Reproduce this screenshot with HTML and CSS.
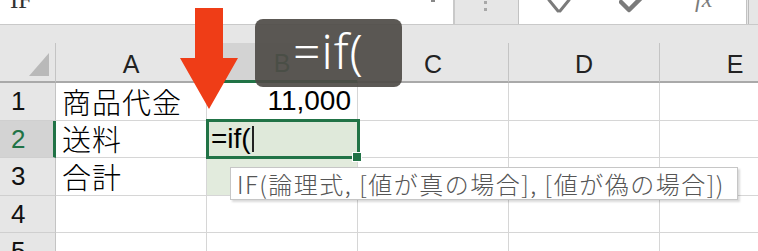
FILE: index.html
```html
<!DOCTYPE html>
<html lang="ja">
<head>
<meta charset="utf-8">
<title>Excel IF</title>
<link rel="stylesheet" href="styles.css">
</head>
<body>
<div class="app">
  <div class="fbar">
    <div class="namebox"><span class="nb-text">IF</span><span class="nb-drop"></span></div>
    <div class="fb-gap"><span class="dot"></span><span class="dot"></span></div>
    <div class="fb-input">
      <svg class="ico ico-x" width="26" height="24" viewBox="0 0 26 24"><path d="M3 0 L12 11 M23 0 L14 11" stroke="#7b7b7b" stroke-width="3" fill="none" stroke-linecap="round"/></svg>
      <svg class="ico ico-ok" width="28" height="24" viewBox="0 0 28 24"><path d="M2 2 L10 10 L26 -6" stroke="#7b7b7b" stroke-width="4.5" fill="none" stroke-linecap="round" stroke-linejoin="round"/></svg>
      <span class="ico-fx">fx</span>
    </div>
    <div class="fb-rest"></div>
  </div>
  <div class="gap"></div>
  <div class="sheet">
    <div class="corner"><span class="tri"></span></div>
    <div class="ch">A</div>
    <div class="ch ch-sel">B</div>
    <div class="ch">C</div>
    <div class="ch">D</div>
    <div class="ch">E</div>

    <div class="rh">1</div>
    <div class="c jp">商品代金</div>
    <div class="c num">11,000</div>
    <div class="c"></div><div class="c"></div><div class="c"></div>

    <div class="rh rh-sel">2</div>
    <div class="c jp">送料</div>
    <div class="c sel"><span class="edit">=if(</span><span class="caret"></span><span class="handle"></span></div>
    <div class="c"></div><div class="c"></div><div class="c"></div>

    <div class="rh">3</div>
    <div class="c jp">合計</div>
    <div class="c tint"></div>
    <div class="c"></div><div class="c"></div><div class="c"></div>

    <div class="rh">4</div>
    <div class="c"></div><div class="c"></div><div class="c"></div><div class="c"></div><div class="c"></div>

    <div class="rh">5</div>
    <div class="c"></div><div class="c"></div><div class="c"></div><div class="c"></div><div class="c"></div>
  </div>

  <svg class="arrow" width="58" height="101" viewBox="0 0 58 101"><polygon points="15,0 43,0 43,50 58,50 29,101 0,50 15,50" fill="#ef3d17"/></svg>
  <div class="caption">=if(</div>
  <div class="tip">IF(論理式, [値が真の場合], [値が偽の場合])</div>
</div>
</body>
</html>
```
FILE: styles.css
```css
html, body {
  margin: 0;
  padding: 0;
  background: #ffffff;
  overflow: hidden;
}
.app {
  position: relative;
  width: 758px;
  height: 251px;
  overflow: hidden;
  background: #e6e6e6;
  font-family: "Noto Sans CJK JP", sans-serif;
}
.fbar {
  display: flex;
  height: 24px;
  border-bottom: 1px solid #c9c9c9;
}
.namebox {
  width: 453px;
  background: #fff;
  border-right: 2px solid #c9c9c9;
  position: relative;
  overflow: hidden;
}
.nb-text {
  display: block;
  margin: -12px 0 0 10px;
  font-family: "Liberation Serif", serif;
  font-size: 25px;
  line-height: 24px;
  color: #333;
}
.nb-drop {
  position: absolute;
  left: 431px;
  top: 0;
  width: 4px;
  height: 2px;
  background: #888;
}
.fb-gap {
  width: 65px;
  display: flex;
  flex-direction: column;
  align-items: center;
  gap: 4px;
  padding-top: 1px;
  margin-left: -2px;
}
.dot {
  width: 3px;
  height: 3px;
  background: #a8a8a8;
}
.fb-input {
  width: 227px;
  background: #fff;
  border-left: 1px solid #c2c2c2;
  border-right: 1px solid #c2c2c2;
  display: flex;
  align-items: flex-start;
  overflow: hidden;
}
.ico { display: block; flex: none; }
.ico-x { margin: 0 0 0 27px; }
.ico-ok { margin: 0 0 0 47px; }
.ico-fx {
  margin: -13px 0 0 48px;
  font-family: "Liberation Serif", serif;
  font-style: italic;
  font-size: 24px;
  line-height: 24px;
  color: #7b7b7b;
}
.fb-rest { flex: 1; border-left: 1px solid #bbb; margin-left: 1px; }
.gap { height: 18px; }

.sheet {
  display: grid;
  grid-template-columns: 56px repeat(5, 151px);
  grid-template-rows: 40px repeat(5, 37.5px);
  background: #fff;
}
.corner {
  background: #e6e6e6;
  border-right: 1px solid #c4c4c4;
  border-bottom: 2px solid #a9a9a9;
  position: relative;
}
.tri {
  position: absolute;
  left: 29px;
  top: 10px;
  width: 0;
  height: 0;
  border-left: 20px solid transparent;
  border-bottom: 23px solid #b9b9b9;
}
.ch {
  background: #e6e6e6;
  border-right: 1px solid #c4c4c4;
  border-bottom: 2px solid #a9a9a9;
  display: flex;
  justify-content: center;
  align-items: flex-end;
  padding-bottom: 2px;
  font-family: "Liberation Sans", sans-serif;
  font-size: 25px;
  line-height: 30px;
  color: #222;
  box-sizing: border-box;
}
.ch-sel {
  background: #d3d3d3;
  border-bottom: 3px solid #217346;
  color: #217346;
}
.rh {
  background: #e6e6e6;
  border-right: 1px solid #c4c4c4;
  border-bottom: 1px solid #cfcfcf;
  box-sizing: border-box;
  padding-left: 11px;
  display: flex;
  align-items: center;
  font-family: "Liberation Sans", sans-serif;
  font-size: 26px;
  line-height: 1;
  color: #111;
  overflow: hidden;
}
.rh-sel {
  background: #d3d3d3;
  color: #217346;
  border-right: 3px solid #217346;
}
.c {
  border-right: 1px solid #d6d6d6;
  border-bottom: 1px solid #d6d6d6;
  box-sizing: border-box;
  display: flex;
  align-items: center;
  padding: 0 6px;
  color: #000;
  white-space: nowrap;
  line-height: 1;
}
.jp {
  font-size: 29px;
  font-weight: 300;
  letter-spacing: 1px;
  padding-left: 6px;
}
.num {
  justify-content: flex-end;
  font-family: "Liberation Sans", sans-serif;
  font-size: 28px;
  padding-right: 6px;
}
.sel {
  position: relative;
  background: #dfe9da;
  padding-left: 4px;
}
.sel::after {
  content: "";
  position: absolute;
  left: -1px;
  top: -2px;
  right: -3px;
  bottom: -2px;
  border: 3px solid #217346;
}
.edit {
  font-family: "Liberation Sans", sans-serif;
  font-size: 28px;
  color: #000;
}
.caret {
  width: 2px;
  height: 26px;
  background: #222;
  margin-left: 1px;
}
.handle {
  position: absolute;
  right: -5px;
  bottom: -5px;
  width: 8px;
  height: 8px;
  background: #217346;
  border: 1px solid #fff;
  z-index: 2;
}
.tint { background: #e2ebdd; }

.arrow {
  position: absolute;
  left: 180px;
  top: 8px;
}
.caption {
  position: absolute;
  left: 255px;
  top: 19px;
  width: 147px;
  height: 68px;
  border-radius: 8px;
  background: rgba(78, 75, 71, 0.92);
  color: #fff;
  font-family: "Noto Sans", sans-serif;
  font-weight: 300;
  font-size: 48px;
  line-height: 64px;
  text-align: center;
  letter-spacing: 1px;
}
.tip {
  position: absolute;
  left: 230px;
  top: 167px;
  width: 508px;
  height: 33px;
  box-sizing: border-box;
  background: #fff;
  border: 1px solid #c6c6c6;
  box-shadow: 2px 2px 2px rgba(0,0,0,0.15);
  padding-left: 6px;
  font-size: 24px;
  font-weight: 300;
  letter-spacing: 1.5px;
  line-height: 31px;
  color: #555;
  white-space: nowrap;
}
```
